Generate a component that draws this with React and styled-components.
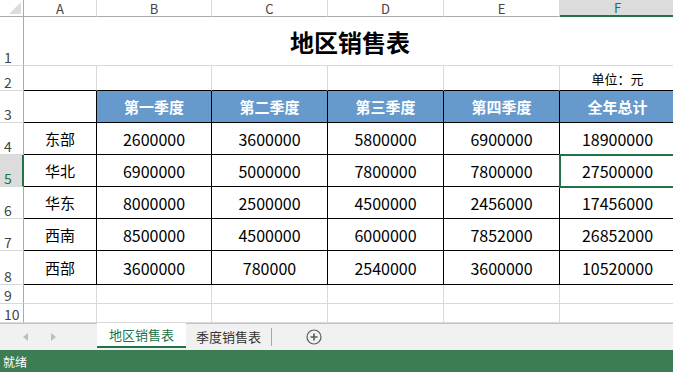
import React from "react";
import styled, { createGlobalStyle } from "styled-components";

const GREEN = "#217346";
const GRID = "#d9d9d9";

const GlobalStyle = createGlobalStyle`
  html, body {
    margin: 0;
    padding: 0;
    background: #fff;
    overflow: hidden;
  }
  body {
    font-family: "Noto Sans CJK SC", "Noto Sans", sans-serif;
  }
`;

const Window = styled.div`
  width: 673px;
  height: 372px;
  display: flex;
  flex-direction: column;
  overflow: hidden;
`;

const Sheet = styled.div`
  display: grid;
  grid-template-columns: 24px 73px 115px 116px 116px 116px 116px;
  grid-template-rows: 17px 49px 25px 32px 32px 32px 32px 32px 34px 19px 19px;
  height: 323px;
  flex: none;
`;

const Corner = styled.div`
  box-sizing: border-box;
  border-right: 1px solid #ababab;
  border-bottom: 1px solid #ababab;
  display: flex;
  align-items: flex-end;
  justify-content: flex-end;
  padding: 0 2px 2px 0;
`;

const ColHeader = styled.div`
  box-sizing: border-box;
  background: ${(p) => (p.$active ? "#dcdcdc" : "#fff")};
  border-right: 1px solid ${GRID};
  border-bottom: ${(p) => (p.$active ? `2px solid ${GREEN}` : "1px solid #ababab")};
  color: ${(p) => (p.$active ? GREEN : "#444")};
  font-size: 13px;
  line-height: 1;
  display: flex;
  align-items: center;
  justify-content: center;
`;

const RowHeader = styled.div`
  box-sizing: border-box;
  background: ${(p) => (p.$active ? "#dcdcdc" : "#fff")};
  border-right: ${(p) => (p.$active ? `2px solid ${GREEN}` : "1px solid #ababab")};
  border-bottom: 1px solid ${GRID};
  color: ${(p) => (p.$active ? GREEN : "#444")};
  font-size: 14px;
  line-height: 1;
  display: flex;
  align-items: flex-end;
  padding: 0 0 1px 4px;
`;

const Cell = styled.div`
  box-sizing: border-box;
  grid-column: ${(p) => (p.$span ? `span ${p.$span}` : "auto")};
  border-right: ${(p) => (p.$span ? "none" : `1px solid ${p.$table ? "#000" : GRID}`)};
  border-bottom: 1px solid ${(p) => (p.$table || p.$underline ? "#000" : GRID)};
  background: ${(p) => (p.$head ? "#6699cc" : "#fff")};
  color: ${(p) => (p.$head ? "#fff" : "#000")};
  font-weight: ${(p) => (p.$head ? 700 : 400)};
  font-size: ${(p) => p.$size || 15}px;
  display: flex;
  align-items: center;
  justify-content: center;
  white-space: nowrap;
  overflow: hidden;
  outline: ${(p) => (p.$selected ? `2px solid ${GREEN}` : "none")};
  outline-offset: -1px;
  position: ${(p) => (p.$selected ? "relative" : "static")};
  z-index: ${(p) => (p.$selected ? 2 : "auto")};
`;

const Title = styled.span`
  font-size: 24px;
  font-weight: 700;
  color: #000;
`;

const TabBar = styled.div`
  height: 27px;
  box-sizing: border-box;
  background: #f1f1f1;
  display: flex;
  align-items: stretch;
  position: relative;
  flex: none;
  &::before {
    content: "";
    position: absolute;
    left: 0;
    right: 0;
    top: 0;
    border-top: 1px solid #c4c4c4;
  }
`;

const Nav = styled.div`
  width: 97px;
  display: flex;
  align-items: center;
  gap: 23px;
  padding-left: 23px;
  box-sizing: border-box;
`;

const Tab = styled.div`
  position: relative;
  z-index: 1;
  box-sizing: border-box;
  height: ${(p) => (p.$active ? "25px" : "auto")};
  padding: 0 ${(p) => (p.$active ? 12 : 10)}px;
  background: ${(p) => (p.$active ? "#fff" : "transparent")};
  border-bottom: ${(p) => (p.$active ? `2px solid ${GREEN}` : "none")};
  color: ${(p) => (p.$active ? GREEN : "#333")};
  font-size: 13px;
  display: flex;
  align-items: center;
`;

const Divider = styled.div`
  width: 1px;
  background: #a6a6a6;
  margin: 5px 0 4px;
`;

const AddButton = styled.div`
  margin-left: 34px;
  display: flex;
  align-items: center;
`;

const StatusBar = styled.div`
  height: 22px;
  background: #3c7d53;
  color: #fff;
  font-size: 12px;
  display: flex;
  align-items: center;
  padding-left: 3px;
  flex: none;
`;

const cols = ["A", "B", "C", "D", "E", "F"];
const heads = ["第一季度", "第二季度", "第三季度", "第四季度", "全年总计"];
const data = [
  ["东部", 2600000, 3600000, 5800000, 6900000, 18900000],
  ["华北", 6900000, 5000000, 7800000, 7800000, 27500000],
  ["华东", 8000000, 2500000, 4500000, 2456000, 17456000],
  ["西南", 8500000, 4500000, 6000000, 7852000, 26852000],
  ["西部", 3600000, 780000, 2540000, 3600000, 10520000],
];

const Arrow = ({ dir }) => (
  <svg width="5" height="8" viewBox="0 0 5 8">
    <polygon
      points={dir === "left" ? "5,0 0,4 5,8" : "0,0 5,4 0,8"}
      fill="#bdbdbd"
    />
  </svg>
);

const App = () => {
  return (
    <Window>
      <GlobalStyle />
      <Sheet>
        <Corner>
          <svg width="12" height="12" viewBox="0 0 12 12">
            <polygon points="12,0 12,12 0,12" fill="#dcdcdc" />
          </svg>
        </Corner>
        {cols.map((c) => (
          <ColHeader key={c} $active={c === "F"}>
            {c}
          </ColHeader>
        ))}

        <RowHeader>1</RowHeader>
        <Cell $span={6}>
          <Title>地区销售表</Title>
        </Cell>

        <RowHeader>2</RowHeader>
        {cols.map((c) => (
          <Cell key={c} $underline $size={13}>
            {c === "F" ? "单位：元" : ""}
          </Cell>
        ))}

        <RowHeader>3</RowHeader>
        <Cell $table />
        {heads.map((h) => (
          <Cell key={h} $table $head>
            {h}
          </Cell>
        ))}

        {data.map((row, i) => (
          <React.Fragment key={row[0]}>
            <RowHeader $active={i === 1}>{i + 4}</RowHeader>
            {row.map((v, j) => (
              <Cell
                key={j}
                $table
                $size={j === 0 ? 15 : 16}
                $selected={i === 1 && j === 5}
              >
                {v}
              </Cell>
            ))}
          </React.Fragment>
        ))}

        {[9, 10].map((n) => (
          <React.Fragment key={n}>
            <RowHeader>{n}</RowHeader>
            {cols.map((c) => (
              <Cell key={c} />
            ))}
          </React.Fragment>
        ))}
      </Sheet>
      <TabBar>
        <Nav>
          <Arrow dir="left" />
          <Arrow dir="right" />
        </Nav>
        <Tab $active>地区销售表</Tab>
        <Tab>季度销售表</Tab>
        <Divider />
        <AddButton>
          <svg width="16" height="16" viewBox="0 0 16 16">
            <circle cx="8" cy="8" r="7" fill="none" stroke="#5a5a5a" strokeWidth="1.2" />
            <path d="M8 4.5v7M4.5 8h7" stroke="#5a5a5a" strokeWidth="1.6" />
          </svg>
        </AddButton>
      </TabBar>
      <StatusBar>就绪</StatusBar>
    </Window>
  );
};

export default App;
